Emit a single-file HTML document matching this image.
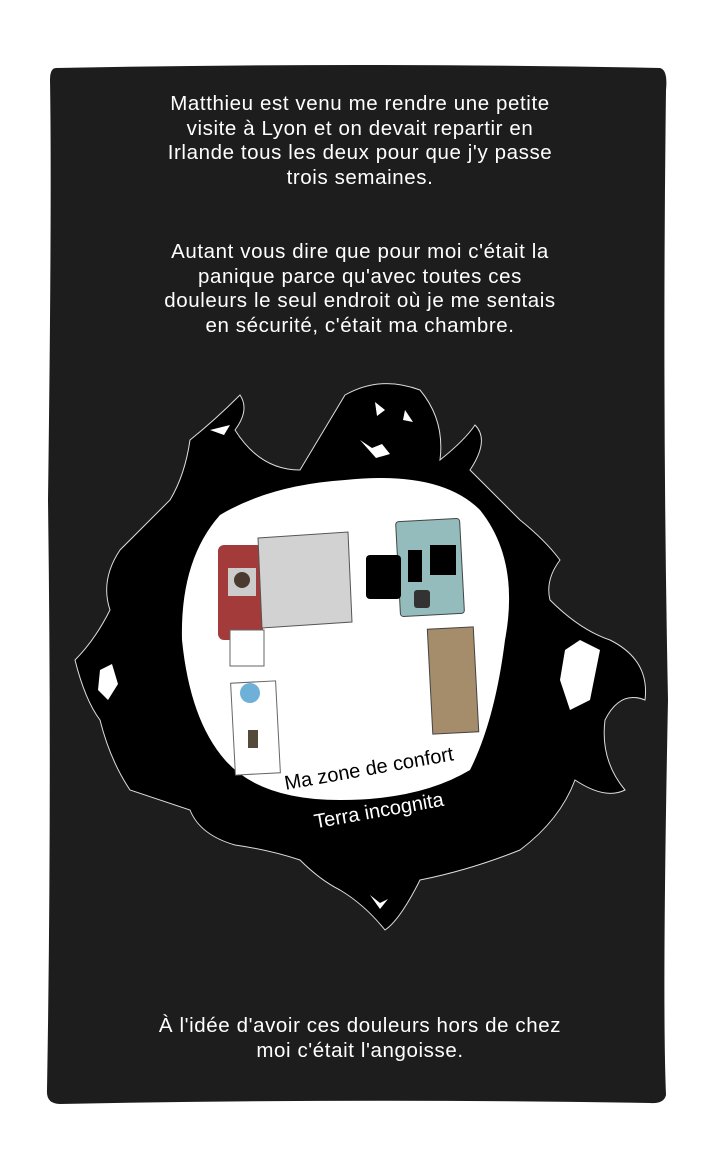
<!DOCTYPE html>
<html><head><meta charset="utf-8"><style>
body{margin:0;background:#fff;width:720px;height:1170px;overflow:hidden;font-family:"Liberation Sans",sans-serif}
.t{position:absolute;left:60px;width:600px;text-align:center;color:#fff;font-size:20.5px;letter-spacing:0.6px;line-height:24.5px}
</style></head><body>
<svg width="720" height="1170" style="position:absolute;left:0;top:0">
<path d="M56 68 Q360 62 660 68 Q668 70 666 90 Q662 400 668 700 Q662 1000 666 1095 Q664 1104 650 1103 Q360 1098 60 1104 Q46 1104 47 1090 Q52 800 48 500 Q52 200 50 80 Q50 68 56 68Z" fill="#1d1d1d"/>
<g fill="#000" stroke="#ddd" stroke-width="1">
<path d="M190 440 Q215 420 240 395 Q250 410 235 430 Q260 470 300 470 Q330 420 345 395 Q380 375 420 390 Q445 420 440 460 Q465 440 475 425 Q490 440 470 470 Q500 500 520 520 Q545 540 560 560 Q545 580 550 600 Q580 630 610 640 Q650 660 645 700 Q620 690 605 720 Q600 760 625 790 Q605 800 575 780 Q560 820 520 850 Q470 870 420 880 Q400 920 385 930 Q365 905 340 890 Q320 880 300 860 Q270 850 235 845 Q200 835 190 810 Q160 800 130 790 Q110 760 100 720 Q85 700 75 660 Q95 640 110 610 Q100 580 120 550 Q150 520 170 500 Q185 475 190 440Z"/>
</g>
<g fill="#fff">
<path d="M375 402 l10 8 -8 6z M405 410 l8 12 -10 -2z M360 440 l12 8 10 -4 8 10 -14 4z M565 650 l15 -10 20 10 -10 50 -20 10 -10 -30z M100 670 l12 -6 6 20 -10 16 -10 -10z M370 895 l10 8 8 -4 -8 10z"/>
<path d="M210 430 l20 -5 -6 10z"/>
<path d="M345 480 Q440 470 480 510 Q520 560 505 640 Q495 720 470 770 Q420 800 340 800 Q260 800 225 760 Q190 720 182 640 Q180 560 220 515 Q270 485 345 480Z"/>
</g>
<rect x="218" y="545" width="45" height="95" rx="6" fill="#a43b3b"/>
<path d="M258 538 L348 532 L352 622 L262 628Z" fill="#d2d2d2" stroke="#555"/>
<rect x="228" y="568" width="28" height="28" fill="#ccc"/>
<circle cx="242" cy="580" r="8" fill="#4a3a30"/>
<rect x="398" y="520" width="64" height="95" rx="3" fill="#94bcbc" stroke="#444" transform="rotate(-3 430 567)"/>
<rect x="366" y="555" width="35" height="44" rx="4" fill="#000"/>
<rect x="408" y="550" width="14" height="32" fill="#000"/><rect x="430" y="545" width="26" height="30" fill="#000"/>
<rect x="414" y="590" width="16" height="18" rx="3" fill="#333"/>
<rect x="430" y="628" width="46" height="105" fill="#a58c6a" stroke="#444" transform="rotate(-3 453 680)"/>
<rect x="230" y="630" width="34" height="36" fill="#fff" stroke="#666"/>
<rect x="233" y="682" width="45" height="92" fill="#fff" stroke="#666" transform="rotate(-3 255 728)"/>
<circle cx="250" cy="693" r="10" fill="#6fb0d8"/>
<rect x="248" y="730" width="10" height="18" fill="#544a3a"/>
<text x="370" y="775" fill="#000" font-size="20" text-anchor="middle" transform="rotate(-10 370 775)" font-family="Liberation Sans">Ma zone de confort</text>
<text x="380" y="817" fill="#fff" font-size="20" text-anchor="middle" transform="rotate(-10 380 817)" font-family="Liberation Sans">Terra incognita</text>
</svg>
<div class="t" style="top:92px">Matthieu est venu me rendre une petite<br>visite à Lyon et on devait repartir en<br>Irlande tous les deux pour que j'y passe<br>trois semaines.</div>
<div class="t" style="top:240px">Autant vous dire que pour moi c'était la<br>panique parce qu'avec toutes ces<br>douleurs le seul endroit où je me sentais<br>en sécurité, c'était ma chambre.</div>
<div class="t" style="top:1014px">À l'idée d'avoir ces douleurs hors de chez<br>moi c'était l'angoisse.</div>
</body></html>
